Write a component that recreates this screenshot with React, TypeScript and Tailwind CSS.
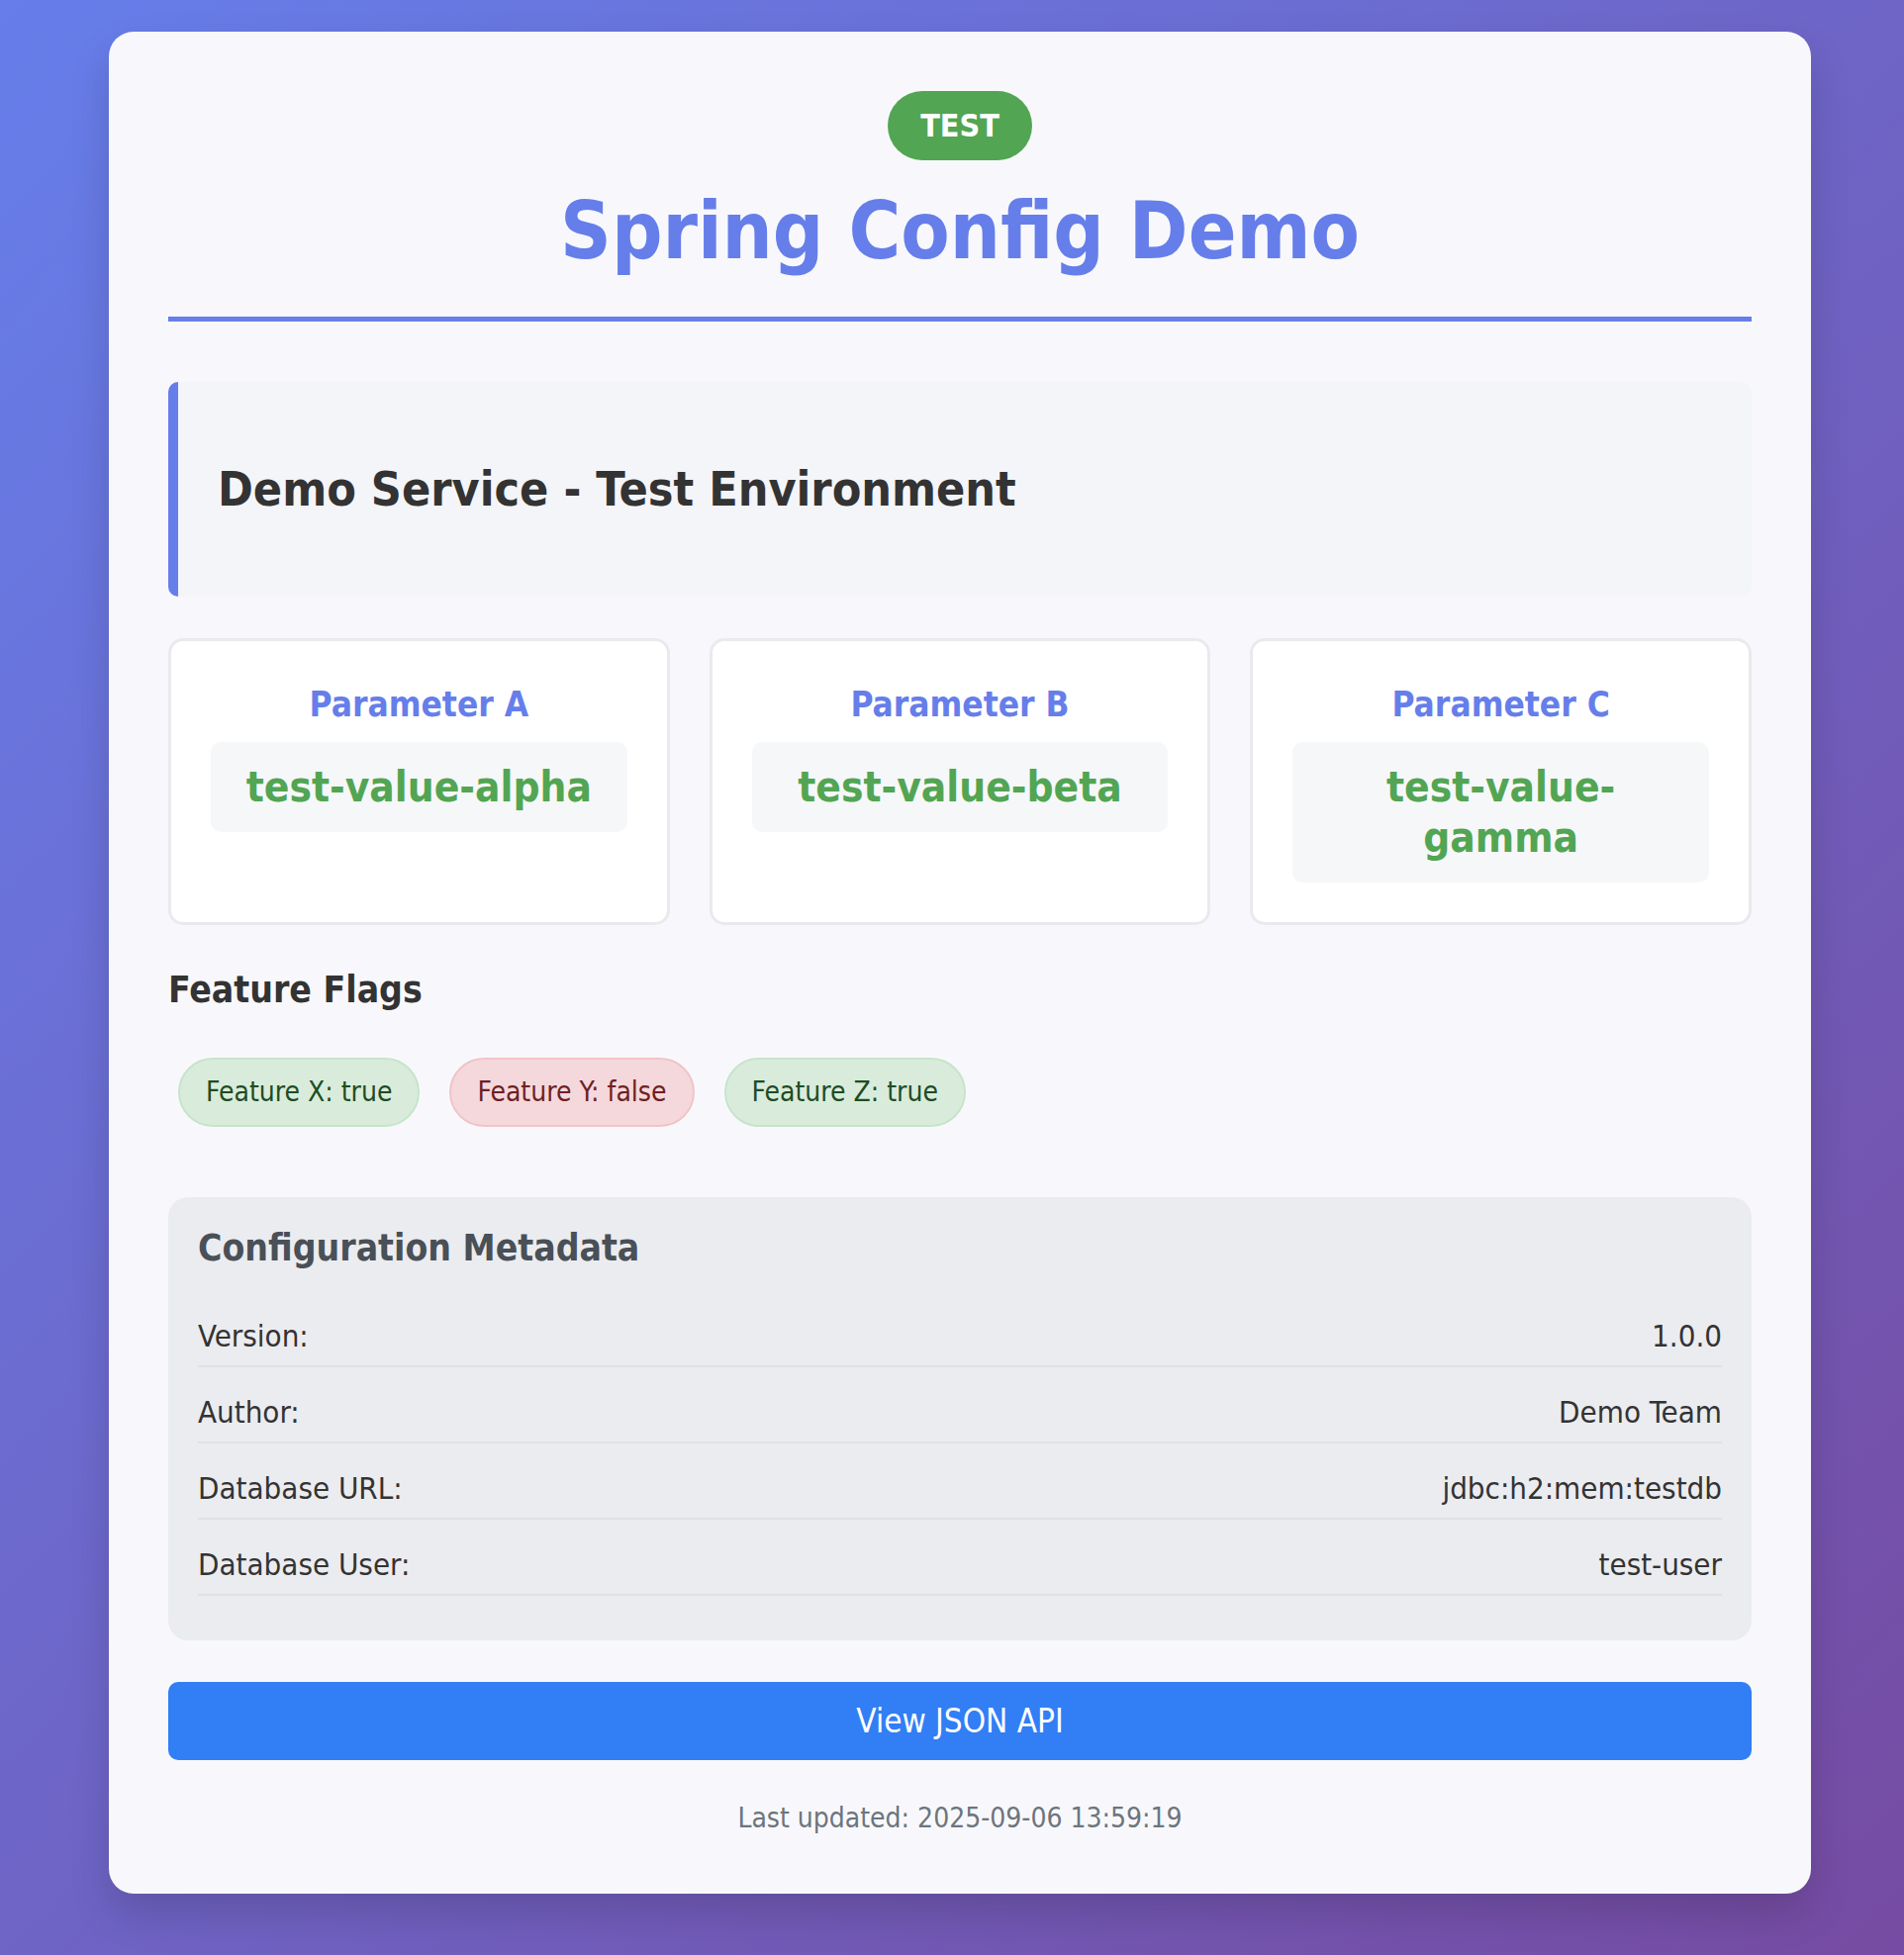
const PARAMS = [
  { label: "Parameter A", value: "test-value-alpha" },
  { label: "Parameter B", value: "test-value-beta" },
  { label: "Parameter C", value: "test-value-gamma" },
];

const FLAGS = [
  { label: "Feature X", on: true },
  { label: "Feature Y", on: false },
  { label: "Feature Z", on: true },
];

const META = [
  { key: "Version:", value: "1.0.0" },
  { key: "Author:", value: "Demo Team" },
  { key: "Database URL:", value: "jdbc:h2:mem:testdb" },
  { key: "Database User:", value: "test-user" },
];

export default function App() {
  return (
    <div className="min-h-screen bg-[linear-gradient(135deg,#667eea_0%,#764ba2_100%)] py-[32px] font-['DejaVu_Sans_Condensed','DejaVu_Sans',sans-serif] font-stretch-condensed text-[#333]">
      <div className="ml-[110px] w-[1720px] rounded-[25px] bg-[#f8f8fc] p-[60px] shadow-[0_20px_40px_rgba(0,0,0,0.15)]">
        <header className="flex flex-col items-center border-b-[5px] border-[#667eea] pb-[38px]">
          <span className="flex h-[70px] items-center rounded-full bg-[#52a552] px-[33px] text-[32px] font-bold uppercase leading-none text-white">
            Test
          </span>
          <h1 className="mt-[24px] text-[80px] font-bold leading-[1.2] text-[#667eea]">Spring Config Demo</h1>
        </header>

        <div className="mt-[61px] flex h-[217px] items-center rounded-[10px] border-l-[10px] border-[#667eea] bg-[#f4f5f9] pl-[40px]">
          <h2 className="text-[48px] font-bold leading-[1.2] text-[#333]">Demo Service - Test Environment</h2>
        </div>

        <div className="mt-[42px] grid grid-cols-3 gap-[40px]">
          {PARAMS.map((p) => (
            <div key={p.label} className="rounded-[15px] border-[3px] border-[#e9eaee] bg-white p-[40px] text-center">
              <h3 className="mb-[17px] pt-[3px] text-[35px] font-bold leading-[1.2] text-[#667eea]">{p.label}</h3>
              <div className="rounded-[10px] bg-[#f6f7f9] px-[20px] py-[20px] text-[42px] font-bold leading-[51px] text-[#52a552]">
                {p.value}
              </div>
            </div>
          ))}
        </div>

        <h3 className="mt-[44px] text-[37px] font-bold leading-[1.2] text-[#333]">Feature Flags</h3>
        <div className="mt-[46px] flex gap-[30px] pl-[10px]">
          {FLAGS.map((f) => (
            <span
              key={f.label}
              className={`flex h-[70px] items-center rounded-full border-2 px-[26px] text-[28px] leading-none ${
                f.on ? "border-[#c6e4cb] bg-[#d9ecdb] text-[#1e4d24]" : "border-[#f0c4c8] bg-[#f5d8db] text-[#6e1f25]"
              }`}
            >
              {f.label}: {f.on ? "true" : "false"}
            </span>
          ))}
        </div>

        <div className="mt-[71px] rounded-[20px] bg-[#ebecf0] p-[30px]">
          <h3 className="mb-[35px] text-[37px] font-bold leading-[1.2] text-[#495057]">Configuration Metadata</h3>
          {META.map((m) => (
            <div
              key={m.key}
              className="mb-[15px] flex justify-between border-b-2 border-[#dfe1e5] pt-[12px] pb-[12px] text-[31px] leading-[36px] text-[#333]"
            >
              <span>{m.key}</span>
              <span>{m.value}</span>
            </div>
          ))}
        </div>

        <button
          type="button"
          className="mt-[42px] flex h-[79px] w-full items-center justify-center rounded-[10px] bg-[#317ef5] text-[33px] text-white"
        >
          View JSON API
        </button>

        <p className="mt-[43px] text-center text-[28px] leading-[32px] text-[#6c757d]">Last updated: 2025-09-06 13:59:19</p>
      </div>
    </div>
  );
}
